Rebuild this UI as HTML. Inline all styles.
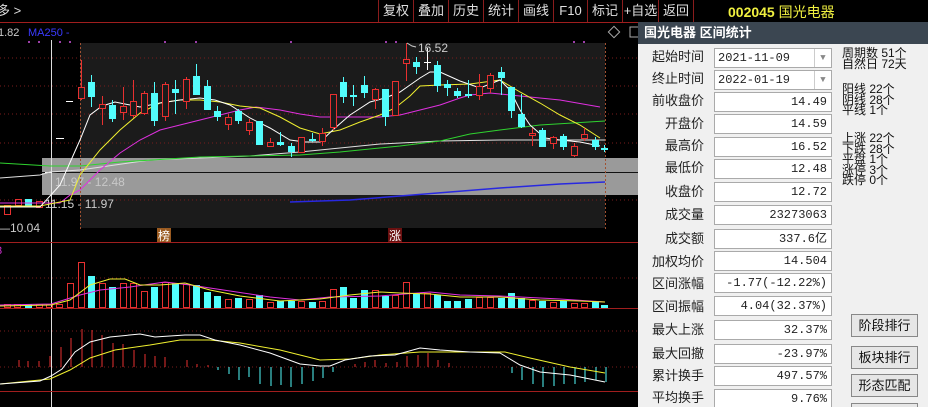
<!DOCTYPE html>
<html style="width:928px;height:407px;overflow:hidden"><head><meta charset="utf-8"><style>
*{margin:0;padding:0;box-sizing:border-box}
body{width:928px;height:407px;background:#000;overflow:hidden;position:relative;font-family:"Liberation Sans","Noto Sans CJK SC",sans-serif}
.tb{position:absolute;top:0;height:22px;border-left:1px solid #8a1c1c;color:#e0e0e0;font-size:13px;line-height:22px;text-align:center}
#dlg{position:absolute;left:638px;top:22px;width:290px;height:385px;background:#f0f0f0;overflow:hidden}
#dlg .t{height:22px;background:#3b4651;color:#fff;font-weight:bold;font-size:13px;line-height:22px;padding-left:6px}
.l{position:absolute;left:0;width:66px;text-align:right;font-size:13px;color:#222;line-height:16px}
.i{position:absolute;left:76px;width:118px;height:20px;background:#fff;border:1px solid #aaa;font-family:"Liberation Mono",monospace;font-size:12px;line-height:18px;text-align:right;padding-right:4px;color:#222}
.s{position:absolute;left:204px;font-size:12px;color:#111;line-height:10.5px;white-space:pre}
.b{position:absolute;left:213px;width:67px;height:23px;background:#e6e6e6;border:1px solid #888;font-size:13px;text-align:center;line-height:21px;color:#111}
</style></head><body>
<svg width="638" height="407" style="position:absolute;left:0;top:0" font-family="Liberation Sans, Noto Sans CJK SC, sans-serif">
<line x1="0" y1="22.5" x2="700" y2="22.5" stroke="#a01e1e"/>
<text x="-3" y="15" fill="#ddd" font-size="13">多 &gt;</text>
<text x="-2" y="36" fill="#ccc" font-size="11">1.82</text>
<text x="28" y="36" fill="#3a3aff" font-size="11">MA250 -</text>
<rect x="80" y="43" width="525" height="185" fill="#1b1b1b"/>
<g fill="#9b3ea8"><rect x="28" y="41" width="2" height="2"/><rect x="38" y="41" width="2" height="2"/><rect x="59" y="41" width="2" height="2"/><rect x="69" y="41" width="2" height="2"/><rect x="164" y="41" width="2" height="2"/><rect x="195" y="41" width="2" height="2"/><rect x="290" y="41" width="2" height="2"/><rect x="385" y="41" width="2" height="2"/><rect x="395" y="41" width="2" height="2"/><rect x="573" y="41" width="2" height="2"/><rect x="583" y="41" width="2" height="2"/></g>
<g stroke="#7a1c1c" stroke-dasharray="1,3"><line x1="0" y1="58" x2="638" y2="58"/><line x1="0" y1="86" x2="638" y2="86"/><line x1="0" y1="114" x2="638" y2="114"/><line x1="0" y1="143" x2="638" y2="143"/><line x1="0" y1="200" x2="638" y2="200"/><line x1="0" y1="278" x2="638" y2="278"/><line x1="0" y1="331" x2="638" y2="331"/><line x1="0" y1="367" x2="638" y2="367"/></g>
<rect x="42" y="158" width="596" height="37" fill="#9a9a9a"/>
<line x1="42" y1="172.5" x2="638" y2="172.5" stroke="#111"/>
<text x="55" y="186" fill="#c8c8c8" font-size="12">11.97 - 12.48</text>
<text x="45" y="208" fill="#ccc" font-size="12">11.15 - 11.97</text>
<text x="-2" y="232" fill="#ccc" font-size="12">—10.04</text>
<line x1="51.5" y1="40" x2="51.5" y2="407" stroke="#ddd"/>
<line x1="80.5" y1="43" x2="80.5" y2="230" stroke="#a05030" stroke-dasharray="2,2"/>
<line x1="605.5" y1="43" x2="605.5" y2="230" stroke="#a05030" stroke-dasharray="2,2"/>
<line x1="66" y1="101.5" x2="73" y2="101.5" stroke="#fff"/><line x1="56" y1="138.5" x2="64" y2="138.5" stroke="#fff"/>
<line x1="45" y1="172.5" x2="52" y2="172.5" stroke="#fff"/>
<g stroke="#e83030" fill="none"><rect x="4.5" y="205.5" width="6" height="9"/><rect x="15.5" y="199.5" width="6" height="6"/><rect x="36.5" y="201.5" width="6" height="6"/></g>
<rect x="25" y="199" width="7" height="8" fill="#52fdfd"/>
<polyline fill="none" stroke="#e0e0e0" stroke-width="1" points="0,178 40,175 50,172 80,170 150,160 250,156 300,152 380,144 440,141 500,140 605,140"/>
<polyline fill="none" stroke="#2fd22f" points="0,163 50,166 80,166 120,162 200,157 300,155 340,152 400,146 440,141 470,134 500,130 540,125 605,121"/>
<polyline fill="none" stroke="#2828e0" stroke-width="1.5" points="290,202 350,200 400,196 450,192 500,188 560,184 605,182"/>
<polyline fill="none" stroke="#e030e0" points="0,203 40,203 60,203 70,195 80,190 100,170 120,153 140,140 160,130 180,125 200,120 220,115 240,110 256,107 280,110 300,114 320,117 360,117 380,117 400,115 420,110 440,105 460,98 470,95 490,93 520,96 560,100 600,107"/>
<polyline fill="none" stroke="#f0f030" points="0,206 40,206 70,200 80,175 100,150 120,130 140,113 160,103 180,100 200,100 220,102 240,106 260,108 280,117 300,128 320,134 340,130 360,122 380,115 395,108 410,96 420,86 440,85 470,84 500,80 520,92 540,103 560,115 580,125 600,138"/>
<polyline fill="none" stroke="#fff" points="0,207 40,207 60,185 80,140 90,115 102,106 115,102 140,107 160,103 180,100 200,98 215,100 230,105 250,118 270,128 290,140 305,142 320,142 335,128 350,115 370,102 385,98 400,92 410,85 420,78 430,72 440,72 460,81 480,88 500,80 510,90 520,110 530,125 545,138 560,140 580,142 600,146"/>
<g stroke="#e83030" stroke-width="1">
<line x1="81.5" y1="60" x2="81.5" y2="100"/><line x1="102.5" y1="96" x2="102.5" y2="125"/><line x1="123.5" y1="87" x2="123.5" y2="120"/><line x1="133.5" y1="80" x2="133.5" y2="118"/><line x1="144.5" y1="91" x2="144.5" y2="115"/><line x1="165.5" y1="82" x2="165.5" y2="121"/><line x1="186.5" y1="77" x2="186.5" y2="109"/><line x1="228.5" y1="114" x2="228.5" y2="130"/><line x1="249.5" y1="119" x2="249.5" y2="135"/><line x1="270.5" y1="138" x2="270.5" y2="147"/><line x1="301.5" y1="137" x2="301.5" y2="152"/><line x1="322.5" y1="128" x2="322.5" y2="146"/><line x1="333.5" y1="94" x2="333.5" y2="130"/><line x1="375.5" y1="88" x2="375.5" y2="109"/><line x1="395.5" y1="81" x2="395.5" y2="115"/><line x1="406.5" y1="43" x2="406.5" y2="81"/><line x1="479.5" y1="74" x2="479.5" y2="100"/><line x1="490.5" y1="73" x2="490.5" y2="93"/><line x1="532.5" y1="128" x2="532.5" y2="146"/><line x1="553.5" y1="136" x2="553.5" y2="149"/><line x1="574.5" y1="143" x2="574.5" y2="157"/><line x1="584.5" y1="128" x2="584.5" y2="141"/>
</g>
<g stroke="#e83030" fill="#1b1b1b">
<rect x="78.5" y="87.5" width="6" height="11"/><rect x="99.5" y="104.5" width="6" height="4"/><rect x="120.5" y="106.5" width="6" height="6"/><rect x="130.5" y="101.5" width="6" height="14"/><rect x="141.5" y="93.5" width="6" height="20"/><rect x="162.5" y="84.5" width="6" height="32"/><rect x="183.5" y="79.5" width="6" height="22"/><rect x="225.5" y="117.5" width="6" height="7"/><rect x="246.5" y="122.5" width="6" height="8"/><rect x="267.5" y="142.5" width="6" height="4"/><rect x="298.5" y="137.5" width="6" height="15"/><rect x="319.5" y="133.5" width="6" height="8"/><rect x="330.5" y="94.5" width="6" height="33"/><rect x="372.5" y="89.5" width="6" height="10"/><rect x="392.5" y="81.5" width="6" height="34"/><rect x="403.5" y="59.5" width="6" height="4"/><rect x="476.5" y="86.5" width="6" height="9"/><rect x="487.5" y="75.5" width="6" height="13"/><rect x="529.5" y="133.5" width="6" height="2"/><rect x="550.5" y="137.5" width="6" height="6"/><rect x="571.5" y="146.5" width="6" height="9"/><rect x="581.5" y="134.5" width="6" height="4"/>
</g>
<g stroke="#52fdfd">
<line x1="91.5" y1="75" x2="91.5" y2="107"/><line x1="112.5" y1="100" x2="112.5" y2="122"/><line x1="154.5" y1="82" x2="154.5" y2="126"/><line x1="175.5" y1="80" x2="175.5" y2="114"/><line x1="196.5" y1="64" x2="196.5" y2="95"/><line x1="207.5" y1="80" x2="207.5" y2="110"/><line x1="217.5" y1="106" x2="217.5" y2="121"/><line x1="238.5" y1="109" x2="238.5" y2="124"/><line x1="259.5" y1="121" x2="259.5" y2="145"/><line x1="280.5" y1="132" x2="280.5" y2="146"/><line x1="291.5" y1="143" x2="291.5" y2="157"/><line x1="312.5" y1="133" x2="312.5" y2="142"/><line x1="343.5" y1="77" x2="343.5" y2="103"/><line x1="353.5" y1="85" x2="353.5" y2="106"/><line x1="364.5" y1="76" x2="364.5" y2="98"/><line x1="385.5" y1="89" x2="385.5" y2="126"/><line x1="416.5" y1="57" x2="416.5" y2="74"/><line x1="437.5" y1="61" x2="437.5" y2="92"/><line x1="447.5" y1="80" x2="447.5" y2="96"/><line x1="457.5" y1="88" x2="457.5" y2="98"/><line x1="468.5" y1="80" x2="468.5" y2="98"/><line x1="501.5" y1="67" x2="501.5" y2="95"/><line x1="511.5" y1="87" x2="511.5" y2="118"/><line x1="521.5" y1="94" x2="521.5" y2="128"/><line x1="542.5" y1="128" x2="542.5" y2="147"/><line x1="563.5" y1="134" x2="563.5" y2="150"/><line x1="595.5" y1="137" x2="595.5" y2="150"/><line x1="604.5" y1="145" x2="604.5" y2="152"/>
</g>
<g fill="#52fdfd">
<rect x="88" y="82" width="7" height="15"/><rect x="109" y="105" width="7" height="14"/><rect x="151" y="93" width="7" height="28"/><rect x="172" y="89" width="7" height="4"/><rect x="193" y="76" width="7" height="19"/><rect x="204" y="86" width="7" height="24"/><rect x="214" y="111" width="7" height="6"/><rect x="235" y="111" width="7" height="10"/><rect x="256" y="121" width="7" height="24"/><rect x="277" y="142" width="7" height="3"/><rect x="288" y="146" width="7" height="6"/><rect x="309" y="139" width="7" height="2"/><rect x="340" y="82" width="7" height="15"/><rect x="350" y="95" width="7" height="2"/><rect x="361" y="85" width="7" height="8"/><rect x="382" y="89" width="7" height="28"/><rect x="413" y="62" width="7" height="5"/><rect x="434" y="65" width="7" height="21"/><rect x="444" y="84" width="7" height="4"/><rect x="454" y="91" width="7" height="5"/><rect x="465" y="94" width="7" height="2"/><rect x="498" y="72" width="7" height="6"/><rect x="508" y="87" width="7" height="24"/><rect x="518" y="114" width="7" height="13"/><rect x="539" y="130" width="7" height="17"/><rect x="560" y="136" width="7" height="11"/><rect x="592" y="140" width="7" height="7"/><rect x="601" y="148" width="7" height="2"/>
</g>
<line x1="427.5" y1="48" x2="427.5" y2="70" stroke="#fff"/><line x1="424" y1="62.5" x2="431" y2="62.5" stroke="#fff"/>
<polyline points="407,43 412,46 416,47" fill="none" stroke="#ccc"/>
<text x="418" y="52" fill="#ccc" font-size="12">16.52</text>
<rect x="610" y="28" width="8" height="8" fill="none" stroke="#aaa" transform="rotate(45 614 32)"/>
<rect x="630" y="27" width="10" height="10" fill="none" stroke="#aaa"/>
<rect x="157" y="228" width="14" height="14" fill="#9a5a20"/><text x="158" y="240" fill="#fff" font-size="12">榜</text>
<rect x="388" y="228" width="14" height="14" fill="#6a1010"/><text x="389" y="240" fill="#fff" font-size="12">涨</text>
<line x1="0" y1="242.5" x2="638" y2="242.5" stroke="#a01e1e"/>
<text x="-4" y="254" fill="#d030d0" font-size="11">3</text>
<g stroke="#e83030" fill="none">
<rect x="67.5" y="283.5" width="6" height="24"/><rect x="78.5" y="262.5" width="6" height="45"/><rect x="99.5" y="283.5" width="6" height="24"/><rect x="120.5" y="283.5" width="6" height="24"/><rect x="130.5" y="283.5" width="6" height="24"/><rect x="141.5" y="291.5" width="6" height="16"/><rect x="162.5" y="282.5" width="6" height="25"/><rect x="183.5" y="284.5" width="6" height="23"/><rect x="225.5" y="299.5" width="6" height="8"/><rect x="246.5" y="299.5" width="6" height="8"/><rect x="267.5" y="302.5" width="6" height="5"/><rect x="298.5" y="301.5" width="6" height="6"/><rect x="319.5" y="301.5" width="6" height="6"/><rect x="330.5" y="289.5" width="6" height="18"/><rect x="372.5" y="290.5" width="6" height="17"/><rect x="392.5" y="295.5" width="6" height="12"/><rect x="403.5" y="282.5" width="6" height="25"/><rect x="424.5" y="293.5" width="6" height="14"/><rect x="476.5" y="297.5" width="6" height="10"/><rect x="487.5" y="297.5" width="6" height="10"/><rect x="529.5" y="300.5" width="6" height="7"/><rect x="550.5" y="302.5" width="6" height="5"/><rect x="571.5" y="303.5" width="6" height="4"/><rect x="581.5" y="303.5" width="6" height="4"/>
<rect x="4.5" y="304.5" width="6" height="3"/><rect x="14.5" y="304.5" width="6" height="3"/><rect x="36.5" y="304.5" width="6" height="3"/><rect x="46.5" y="304.5" width="6" height="3"/><rect x="56.5" y="304.5" width="6" height="3"/>
</g>
<g fill="#52fdfd">
<rect x="25" y="304" width="7" height="4"/><rect x="88" y="276" width="7" height="32"/><rect x="109" y="287" width="7" height="21"/><rect x="151" y="287" width="7" height="21"/><rect x="172" y="283" width="7" height="25"/><rect x="193" y="285" width="7" height="23"/><rect x="204" y="292" width="7" height="16"/><rect x="214" y="296" width="7" height="12"/><rect x="235" y="298" width="7" height="10"/><rect x="256" y="295" width="7" height="13"/><rect x="277" y="301" width="7" height="7"/><rect x="288" y="301" width="7" height="7"/><rect x="309" y="302" width="7" height="6"/><rect x="340" y="287" width="7" height="21"/><rect x="350" y="298" width="7" height="10"/><rect x="361" y="290" width="7" height="18"/><rect x="382" y="296" width="7" height="12"/><rect x="413" y="294" width="7" height="14"/><rect x="434" y="295" width="7" height="13"/><rect x="444" y="301" width="7" height="7"/><rect x="454" y="301" width="7" height="7"/><rect x="465" y="299" width="7" height="9"/><rect x="498" y="298" width="7" height="10"/><rect x="508" y="293" width="7" height="15"/><rect x="518" y="298" width="7" height="10"/><rect x="539" y="301" width="7" height="7"/><rect x="560" y="301" width="7" height="7"/><rect x="592" y="301" width="7" height="7"/><rect x="601" y="305" width="7" height="3"/>
</g>
<polyline fill="none" stroke="#e030e0" points="0,305 51,304 80,295 100,290 130,287 165,282 190,285 230,291 270,297 300,300 330,297 380,296 430,292 460,295 500,296 560,299 605,302"/>
<polyline fill="none" stroke="#f0f030" points="0,306 51,305 70,300 90,285 110,279 125,279 140,285 160,285 185,283 210,290 240,296 280,301 320,299 350,295 380,292 400,293 430,294 460,297 500,297 540,300 580,301 605,302"/>
<line x1="0" y1="308.5" x2="638" y2="308.5" stroke="#a01e1e"/>
<g stroke="#e83030">
<line x1="19" y1="367" x2="19" y2="360"/><line x1="28" y1="367" x2="28" y2="361"/><line x1="39" y1="367" x2="39" y2="361"/><line x1="50" y1="367" x2="50" y2="356"/><line x1="61" y1="367" x2="61" y2="347"/><line x1="71" y1="367" x2="71" y2="338"/><line x1="82" y1="367" x2="82" y2="329"/><line x1="92" y1="367" x2="92" y2="330"/><line x1="102" y1="367" x2="102" y2="335"/><line x1="113" y1="367" x2="113" y2="343"/><line x1="123" y1="367" x2="123" y2="344"/><line x1="134" y1="367" x2="134" y2="350"/><line x1="145" y1="367" x2="145" y2="354"/><line x1="155" y1="367" x2="155" y2="356"/><line x1="165" y1="367" x2="165" y2="357"/><line x1="187" y1="367" x2="187" y2="360"/><line x1="197" y1="367" x2="197" y2="364"/><line x1="208" y1="367" x2="208" y2="365"/>
<line x1="355" y1="367" x2="355" y2="364"/><line x1="365" y1="367" x2="365" y2="362"/><line x1="375" y1="367" x2="375" y2="360"/><line x1="386" y1="367" x2="386" y2="363"/><line x1="397" y1="367" x2="397" y2="362"/><line x1="407" y1="367" x2="407" y2="356"/><line x1="418" y1="367" x2="418" y2="355"/><line x1="428" y1="367" x2="428" y2="353"/><line x1="438" y1="367" x2="438" y2="360"/><line x1="449" y1="367" x2="449" y2="363"/>
</g>
<g stroke="#52fdfd">
<line x1="218" y1="367" x2="218" y2="370"/><line x1="229" y1="367" x2="229" y2="374"/><line x1="239" y1="367" x2="239" y2="380"/><line x1="249" y1="367" x2="249" y2="377"/><line x1="260" y1="367" x2="260" y2="384"/><line x1="271" y1="367" x2="271" y2="386"/><line x1="281" y1="367" x2="281" y2="385"/><line x1="291" y1="367" x2="291" y2="387"/><line x1="302" y1="367" x2="302" y2="384"/><line x1="313" y1="367" x2="313" y2="381"/><line x1="323" y1="367" x2="323" y2="378"/><line x1="333" y1="367" x2="333" y2="372"/>
<line x1="512" y1="367" x2="512" y2="373"/><line x1="522" y1="367" x2="522" y2="380"/><line x1="533" y1="367" x2="533" y2="384"/><line x1="543" y1="367" x2="543" y2="387"/><line x1="554" y1="367" x2="554" y2="386"/><line x1="564" y1="367" x2="564" y2="384"/><line x1="575" y1="367" x2="575" y2="384"/><line x1="585" y1="367" x2="585" y2="382"/><line x1="596" y1="367" x2="596" y2="380"/><line x1="606" y1="367" x2="606" y2="382"/>
</g>
<polyline fill="none" stroke="#f0f030" points="0,384 50,379 70,370 90,358 115,350 150,345 180,340 210,340 240,343 280,350 320,360 350,359 380,355 420,352 470,352 505,352 530,358 570,367 605,373"/>
<polyline fill="none" stroke="#fff" points="0,384 40,381 51,376 62,369 75,352 90,342 110,337 140,334 155,337 185,335 200,335 215,340 240,345 270,353 300,364 320,366 330,366 345,360 370,356 395,355 420,348 440,350 470,352 500,353 520,365 540,372 570,375 605,382"/>
<line x1="0" y1="391.5" x2="638" y2="391.5" stroke="#a01e1e"/>
</svg>
<div class="tb" style="left:378px;width:35px">复权</div>
<div class="tb" style="left:413px;width:35px">叠加</div>
<div class="tb" style="left:448px;width:35px">历史</div>
<div class="tb" style="left:483px;width:35px">统计</div>
<div class="tb" style="left:518px;width:35px">画线</div>
<div class="tb" style="left:553px;width:34px">F10</div>
<div class="tb" style="left:587px;width:35px">标记</div>
<div class="tb" style="left:622px;width:36px">+自选</div>
<div class="tb" style="left:658px;width:36px;border-right:1px solid #8a1c1c">返回</div>
<div style="position:absolute;left:728px;top:4px;color:#f0f040;font-size:14px;line-height:16px"><b style="font-family:'Liberation Sans',sans-serif">002045</b> 国光电器</div>
<div id="dlg">
<div class="t">国光电器 区间统计</div>
<div class="l" style="top:27px">起始时间</div><div class="i" style="top:26px;text-align:left;padding-left:3px">2021-11-09<span style="position:absolute;right:0;top:0;width:17px;height:18px;border-left:1px solid #ccc;color:#888;text-align:center;font-size:9px">▼</span></div>
<div class="l" style="top:49px">终止时间</div><div class="i" style="top:48px;text-align:left;padding-left:3px">2022-01-19<span style="position:absolute;right:0;top:0;width:17px;height:18px;border-left:1px solid #ccc;color:#888;text-align:center;font-size:9px">▼</span></div>
<div class="l" style="top:71px">前收盘价</div><div class="i" style="top:70px">14.49</div>
<div class="l" style="top:94px">开盘价</div><div class="i" style="top:92px">14.59</div>
<div class="l" style="top:116px">最高价</div><div class="i" style="top:115px">16.52</div>
<div class="l" style="top:138px">最低价</div><div class="i" style="top:137px">12.48</div>
<div class="l" style="top:162px">收盘价</div><div class="i" style="top:160px">12.72</div>
<div class="l" style="top:185px">成交量</div><div class="i" style="top:183px">23273063</div>
<div class="l" style="top:209px">成交额</div><div class="i" style="top:207px">337.6亿</div>
<div class="l" style="top:232px">加权均价</div><div class="i" style="top:229px">14.504</div>
<div class="l" style="top:254px">区间涨幅</div><div class="i" style="top:251px">-1.77(-12.22%)</div>
<div class="l" style="top:277px">区间振幅</div><div class="i" style="top:274px">4.04(32.37%)</div>
<div class="l" style="top:300px">最大上涨</div><div class="i" style="top:298px">32.37%</div>
<div class="l" style="top:324px">最大回撤</div><div class="i" style="top:322px">-23.97%</div>
<div class="l" style="top:346px">累计换手</div><div class="i" style="top:344px">497.57%</div>
<div class="l" style="top:368px">平均换手</div><div class="i" style="top:367px">9.76%</div>
<div class="s" style="top:26px">周期数 51个
自然日 72天</div>
<div class="s" style="top:62px">阳线 22个
阴线 28个
平线 1个</div>
<div class="s" style="top:111px">上涨 22个
下跌 28个
平盘 1个
涨停 3个
跌停 0个</div>
<div class="b" style="top:292px">阶段排行</div>
<div class="b" style="top:324px">板块排行</div>
<div class="b" style="top:352px">形态匹配</div>
<div class="b" style="top:381px"></div>
</div>
</body></html>
